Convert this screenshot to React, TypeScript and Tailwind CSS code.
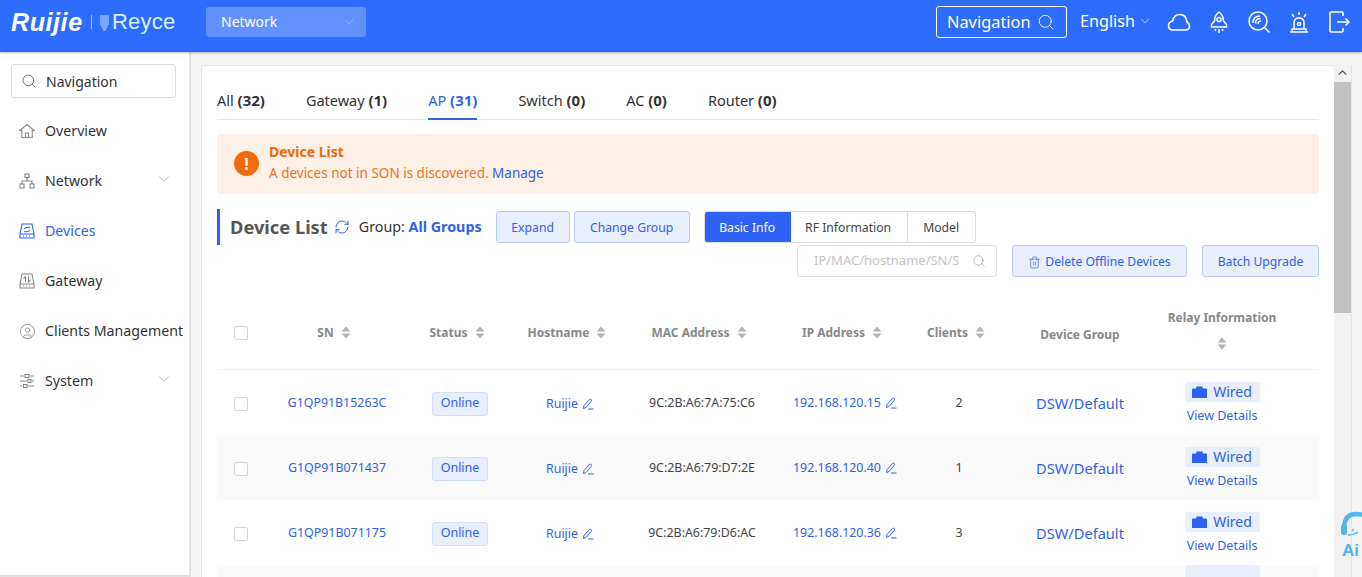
import { Search, ChevronDown, ChevronUp, CircleUser, RefreshCw, Trash2 } from "lucide-react"

const font = { fontFamily: '"Noto Sans", "Open Sans", sans-serif' }

const rows = [
  { sn: "G1QP91B15263C", mac: "9C:2B:A6:7A:75:C6", ip: "192.168.120.15", clients: 2 },
  { sn: "G1QP91B071437", mac: "9C:2B:A6:79:D7:2E", ip: "192.168.120.40", clients: 1 },
  { sn: "G1QP91B071175", mac: "9C:2B:A6:79:D6:AC", ip: "192.168.120.36", clients: 3 },
]

const cols = "grid grid-cols-[48px_144px_102px_118px_146px_140px_88px_154px_130px_32px]"

function Sort() {
  return (
    <svg width="10" height="13" viewBox="0 0 10 13" className="ml-[7px] fill-[#b4b4b4]">
      <path d="M5 0.5 L9.5 5.5 H0.5 Z M0.5 7.5 H9.5 L5 12.5 Z" />
    </svg>
  )
}

function Pen() {
  return (
    <svg width="12" height="12" viewBox="0 0 12 12" fill="none" stroke="currentColor" strokeWidth="1" className="ml-[4px] inline-block">
      <path d="M1.5 10.5 L2 7.5 L7.5 1.5 Q8.5 0.8 9.3 1.6 Q10 2.5 9.2 3.4 L4 9.5 Z M6 11 H11.5" />
    </svg>
  )
}

function Cable() {
  return (
    <svg width="15" height="12" viewBox="0 0 15 12" className="fill-[#2b62f0]">
      <path d="M0 3.5 Q0 2.5 1 2.5 H4 L4.6 0.5 H10.4 L11 2.5 H14 Q15 2.5 15 3.5 V12 H0 Z" />
    </svg>
  )
}

function NavIcon({ name, active }: { name: string; active?: boolean }) {
  const color = active ? "#2f62e6" : "#888888"
  if (name === "Overview")
    return (
      <svg width="16" height="16" viewBox="0 0 16 16" fill="none" stroke={color} strokeWidth="1.1">
        <path d="M0.8 7.5 L8 1.5 L15.2 7.5 H13.2 V14.5 H2.8 V7.5 Z" />
        <path d="M6.5 14.5 V10 H9.5 V14.5" />
      </svg>
    )
  if (name === "Clients Management") return <CircleUser size={17} strokeWidth={1.2} color={color} />
  if (name === "Network")
    return (
      <svg width="16" height="16" viewBox="0 0 16 16" fill="none" stroke={color} strokeWidth="1.1">
        <rect x="6" y="1" width="4" height="3.5" />
        <rect x="1" y="11" width="4" height="4" />
        <rect x="11" y="11" width="4" height="4" />
        <path d="M8 4.5 V8 M3 11 V8 H13 V11" />
      </svg>
    )
  if (name === "System")
    return (
      <svg width="16" height="16" viewBox="0 0 16 16" fill="none" stroke={color} strokeWidth="1.1">
        <path d="M1 3 H5 M11 3 H15 M1 8 H8 M13 8 H15 M1 13 H3 M9 13 H15" />
        <rect x="6" y="1.5" width="4" height="3" />
        <rect x="9" y="6.5" width="3" height="3" />
        <rect x="4.5" y="11.5" width="3.5" height="3" />
      </svg>
    )
  return (
    <svg width="16" height="16" viewBox="0 0 16 16" fill="none" stroke={color} strokeWidth="1.1">
      <path d="M3 1 H13 L15 11 V15 H1 V11 Z M1 11 H15" />
      <path d="M4 13 H5 M7 13 H8 M10 13 H11" />
      {name === "Devices" ? (
        <path d="M5 6 Q7 3.5 11 4.5 M11 7 Q9 9.5 5 8.5" />
      ) : (
        <path d="M6.5 3.5 V9 M4.5 5.5 L6.5 3.5 M9.5 3.5 V9 L11.5 7" />
      )}
    </svg>
  )
}

const nav = ["Overview", "Network", "Devices", "Gateway", "Clients Management", "System"]
const tabs = [
  ["All", 32],
  ["Gateway", 1],
  ["AP", 31],
  ["Switch", 0],
  ["AC", 0],
  ["Router", 0],
] as const

export default function App() {
  return (
    <div style={font} className="relative h-[577px] w-[1362px] overflow-hidden bg-[#f4f4f4] text-[#333]">
      <header className="relative z-10 flex h-[52px] items-center bg-[#2e6cfd] pb-[8px] pl-[11px] text-white shadow-[0_1px_2px_rgba(0,0,0,0.3)]">
        <div className="flex w-[195px] items-center">
          <span style={{ fontFamily: '"Liberation Sans", sans-serif' }} className="w-[73px] text-[25px] leading-none font-bold tracking-[0.6px] italic">Ruijie</span>
          <span className="mx-[7px] h-[14px] w-px bg-white/60" />
          <svg width="11" height="17" viewBox="0 0 11 17" stroke="#bfe6ff" strokeWidth="1" className="mr-[2px]">
            <path d="M1 2 H10 M1 4 H10 M1 6 H10 M1 8 H10 M1 10 H10 M2 12 H9 M3 14 H8 M4 16 H7" />
          </svg>
          <span style={{ fontFamily: '"Liberation Sans", sans-serif' }} className="text-[22px] leading-none tracking-[0.2px] text-[#d8f0ff]">Reyce</span>
        </div>
        <div className="flex h-[30px] w-[160px] items-center justify-between rounded-[3px] bg-white/25 pr-[10px] pl-[15px] text-[14px]">
          <span className="-mt-[2px]">Network</span>
          <ChevronDown size={14} strokeWidth={1} className="text-white/70" />
        </div>
        <div className="ml-auto flex items-center">
          <div className="flex h-[32px] w-[131px] items-center justify-between rounded-[3px] border border-white pr-[11px] pl-[10px] text-[16.4px]">
            Navigation
            <Search size={18} strokeWidth={1.2} />
          </div>
          <div className="-mt-[2px] ml-[13px] flex items-center text-[16.2px]">
            English
            <ChevronDown size={14} strokeWidth={1.2} className="ml-[3px]" />
          </div>
          <div className="mt-[8px] mr-[11px] ml-[15px] flex -translate-y-[4px] items-center gap-[16px]">
            <svg width="24" height="24" viewBox="0 0 24 24" fill="none" stroke="white" strokeWidth="1.6">
              <path d="M6 20 Q1.5 20 1.5 15.5 Q1.5 12 5.5 11 Q7 4.5 13 4.5 Q19 4.5 20 12 Q22.5 13.5 22.5 16 Q22.5 20 18 20 Z" />
            </svg>
            <svg width="24" height="24" viewBox="0 0 24 24" fill="none" stroke="white" strokeWidth="1.5">
              <path d="M12 2 Q16.5 5.5 16.5 11 L19.5 14.5 V17 H4.5 V14.5 L7.5 11 Q7.5 5.5 12 2 Z" />
              <circle cx="12" cy="9.5" r="2" />
              <path d="M8.5 19 V21 M12 19 V23 M15.5 19 V21" />
            </svg>
            <svg width="24" height="24" viewBox="0 0 24 24" fill="none" stroke="white" strokeWidth="1.5">
              <circle cx="11" cy="11" r="9" />
              <path d="M17.5 17.5 L22.5 22.5 M6 13 Q6 6 13 6 M8.5 13.5 Q8.5 8.5 13.5 8.5 M11 14 Q11 11 14 11" />
            </svg>
            <svg width="24" height="24" viewBox="0 0 24 24" fill="none" stroke="white" strokeWidth="1.5">
              <path d="M3 22 H21 M5 22 V19 H19 V22 M7 19 V13 Q7 8 12 8 Q17 8 17 13 V19" />
              <circle cx="12" cy="14" r="1.6" />
              <path d="M12 2 V5 M5 4 L7 7 M19 4 L17 7" />
            </svg>
            <svg width="24" height="24" viewBox="0 0 24 24" fill="none" stroke="white" strokeWidth="1.6">
              <path d="M16 6 V3 Q16 2 15 2 H4 Q3 2 3 3 V21 Q3 22 4 22 H15 Q16 22 16 21 V18 M10 12 H22 M18.5 8.5 L22 12 L18.5 15.5" />
            </svg>
          </div>
        </div>
      </header>

      <div className="flex h-[525px]">
        <aside className="w-[191px] shrink-0 border-r-2 border-b-2 border-[#e2e2e2] bg-white pt-[12px] pl-[11px]">
          <div className="flex h-[34px] w-[165px] items-center rounded-[3px] border border-[#dcdcdc] pl-[9px] text-[14px]">
            <Search size={16} strokeWidth={1.2} className="mr-[9px] text-[#555]" />
            Navigation
          </div>
          <ul className="mt-[8px] -mr-[4px]">
            {nav.map((n) => (
              <li key={n} className={`flex h-[50px] items-center whitespace-nowrap text-[14.2px] ${n === "Devices" ? "text-[#2f62e6]" : "text-[#333]"}`}>
                <span className="-ml-[1px] flex w-[35px] justify-center pr-[1px]"><NavIcon name={n} active={n === "Devices"} /></span>
                {n}
                {(n === "Network" || n === "System") && <ChevronDown size={18} strokeWidth={0.8} className="mr-[20px] -mt-[5px] ml-auto text-[#888]" />}
              </li>
            ))}
          </ul>
        </aside>

        <main className="min-w-0 flex-1 pt-[13px] pl-[10px]">
          <div className="flex h-[600px] items-start">
            <section className="h-[600px] w-[1134px] shrink-0 rounded-[3px] border border-[#e4e4e4] bg-white px-[15px]">
              <nav className="flex h-[54px] items-end border-b border-[#e4e6ec] pt-[20px] text-[14.5px]">
                {tabs.map(([t, c]) => (
                  <div key={t} className={`-mb-px mr-[41px] h-[34px] border-b-2 pt-[3px] ${t === "AP" ? "border-[#2f62e6] text-[#2f62e6]" : "border-transparent"}`}>
                    {t} <b className="text-[15px] font-bold">({c})</b>
                  </div>
                ))}
              </nav>

              <div className="mt-[14px] flex h-[60px] rounded-[3px] bg-[#fdf0e6] pl-[17px] text-[13.5px] text-[#e8741f]">
                <span className="mt-[17px] flex size-[25px] items-center justify-center rounded-full bg-[#f26a0c] text-[16px] font-bold text-white">!</span>
                <div className="ml-[10px] pt-[7px] leading-[21px]">
                  <div className="text-[14px] font-bold text-[#e96b10]">Device List</div>
                  <div className="mt-px">A devices not in SON is discovered. <span className="text-[#2f62e6]">Manage</span></div>
                </div>
              </div>

              <div className="mt-[15px] flex h-[36px] items-center border-l-[3px] border-[#2f62e6] pl-[10px]">
                <h2 className="text-[18.3px] font-bold text-[#555]">Device List</h2>
                <RefreshCw size={16} strokeWidth={1.4} className="ml-[6px] text-[#2f62e6]" />
                <span className="ml-[9px] text-[14.3px]">Group: <b className="text-[#2f62e6]">All Groups</b></span>
                <button className="ml-[14px] h-[32px] w-[74px] rounded-[3px] border border-[#b9cbf6] bg-[#e9eefc] pt-[2px] text-[12.2px] text-[#2f62e6]">Expand</button>
                <button className="ml-[4px] h-[32px] w-[116px] rounded-[3px] border border-[#b9cbf6] bg-[#e9eefc] pt-[2px] text-[12.2px] text-[#2f62e6]">Change Group</button>
                <div className="ml-[14px] flex h-[32px] overflow-hidden rounded-[3px] border border-[#dcdcdc] text-[12.2px]">
                  <span className="-m-px flex w-[87px] items-center justify-center bg-[#2e62f5] pt-[2px] text-white">Basic Info</span>
                  <span className="flex w-[118px] items-center justify-center border-r border-[#dcdcdc] pt-[2px] text-[#444]">RF Information</span>
                  <span className="flex w-[67px] items-center justify-center pt-[2px] text-[#444]">Model</span>
                </div>
              </div>

              <div className="flex h-[32px] justify-end text-[12.2px]">
                <div className="flex w-[200px] items-center justify-between rounded-[3px] border border-[#e0e0e0] pr-[10px] pl-[16px] text-[#c4c4c4]">
                  <span className="w-[152px] overflow-hidden whitespace-nowrap text-[13px]">IP/MAC/hostname/SN/S</span>
                  <Search size={14} strokeWidth={1.2} className="text-[#999]" />
                </div>
                <button className="ml-[15px] flex w-[175px] items-center justify-center rounded-[3px] border border-[#b9cbf6] bg-[#e9eefc] pt-[2px] text-[#2f62e6]">
                  <Trash2 size={13} strokeWidth={1.2} className="mr-[4px]" /> Delete Offline Devices
                </button>
                <button className="ml-[15px] w-[117px] rounded-[3px] border border-[#b9cbf6] bg-[#e9eefc] pt-[2px] text-[#2f62e6]">Batch Upgrade</button>
              </div>

              <div className={`${cols} mt-[23px] h-[70px] items-center border-b border-[#f0f0f0] pb-[4px] text-center text-[12px] font-bold text-[#888]`}>
                <span className="mx-auto size-[14px] rounded-[2px] border border-[#d6d6d6]" />
                {["SN", "Status", "Hostname", "MAC Address", "IP Address", "Clients"].map((h) => (
                  <span key={h} className="flex items-center justify-center pr-[6px]">{h}<Sort /></span>
                ))}
                <span className="mt-[5px]">Device Group</span>
                <span className="-mt-[6px] flex flex-col items-center">
                  Relay Information
                  <span className="mt-[10px] -ml-[7px]"><Sort /></span>
                </span>
              </div>

              {rows.map((r, i) => (
                <div key={r.sn} className={`${cols} h-[65px] items-center pt-[2px] text-center text-[12.4px] ${i % 2 ? "bg-[#fafafa]" : ""}`}>
                  <span className="mx-auto size-[14px] rounded-[2px] border border-[#d6d6d6] bg-white" />
                  <span className="text-[#2f62e6]">{r.sn}</span>
                  <span className="mx-auto flex h-[24px] w-[56px] items-center justify-center rounded-[3px] border border-[#d3def9] bg-[#e9eefc] text-[12.5px] text-[#2f62e6]">Online</span>
                  <span className="flex items-center justify-center pt-[2px] text-[#2f62e6]">Ruijie<Pen /></span>
                  <span className="text-[#444]">{r.mac}</span>
                  <span className="flex items-center justify-center text-[#2f62e6]">{r.ip}<Pen /></span>
                  <span className="text-[#444]">{r.clients}</span>
                  <span className="text-[14.6px] text-[#2f62e6]">DSW/Default</span>
                  <span className="-mt-[2px] flex flex-col items-center text-[#2f62e6]">
                    <span className="flex h-[20px] w-[75px] items-center justify-center gap-[6px] rounded-[3px] bg-[#e9eefc] text-[14px]"><Cable />Wired</span>
                    <span className="mt-[5px] text-[12.5px] leading-[17px]">View Details</span>
                  </span>
                </div>
              ))}
              <div className={`${cols} h-[65px] bg-[#fafafa] text-[12px]`}>
                <span className="col-start-9 mx-auto h-[20px] w-[75px] rounded-[3px] bg-[#e9eefc]" />
              </div>
            </section>

            <div className="ml-[-1px] flex h-[525px] w-[17px] shrink-0 flex-col items-center bg-[#f1f1f1]">
              <ChevronUp size={13} strokeWidth={2.5} className="mt-[1px] mb-[3px] text-[#505050]" />
              <div className="h-[231px] w-full bg-[#c1c1c1]" />
            </div>
            <div className="h-[525px] flex-1 border-l border-[#e2e2e2]" />
          </div>
        </main>
      </div>

      <div className="absolute top-[511px] left-[1340px] h-[50px] w-[22px] text-[#52b5ec]">
        <svg width="22" height="32" viewBox="0 0 22 32" fill="none" stroke="#52b5ec" strokeWidth="4.5">
          <path d="M4 18 Q4 3 16 3 Q20 3 24 4" />
          <path d="M8 24 Q14 24 18 21" strokeWidth="1.5" />
          <rect x="1" y="13" width="6" height="11" rx="3" fill="#52b5ec" stroke="none" />
          <circle cx="13" cy="19" r="1" fill="#52b5ec" stroke="none" />
        </svg>
        <span style={{ fontFamily: '"Liberation Sans", sans-serif' }} className="absolute top-[31px] left-[2px] text-[17px] leading-none font-bold">Ai</span>
      </div>
    </div>
  )
}
